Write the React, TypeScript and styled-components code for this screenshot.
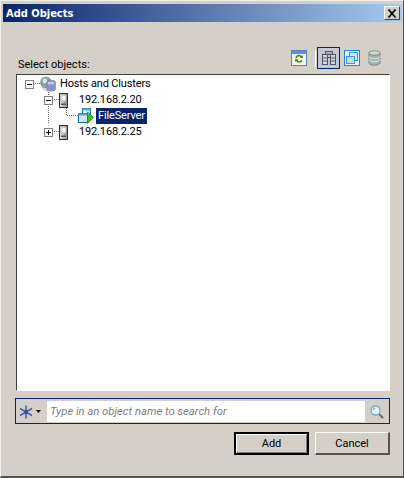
import React from "react";
import styled, { createGlobalStyle } from "styled-components";

const UI_FONT = `"Roboto", "Liberation Sans", Arial, sans-serif`;

const Global = createGlobalStyle`
  html, body { margin: 0; padding: 0; background: #d4d0c8; }
  body { width: 404px; height: 478px; overflow: hidden; font-family: ${UI_FONT}; }
`;

const Win = styled.div`
  box-sizing: border-box;
  width: 404px;
  height: 478px;
  padding: 3px 1px 0 3px;
  background: #d4d0c8;
  border-top: 1px solid #f1efea;
  border-left: 1px solid #f1efea;
  border-right: 1px solid #55534e;
  border-bottom: 2px solid #55534e;
  display: flex;
  flex-direction: column;
`;

const TitleBar = styled.div`
  flex: none;
  height: 18px;
  margin-left: -1px;
  display: flex;
  align-items: center;
  justify-content: space-between;
  padding: 0 2px 0 3px;
  background: linear-gradient(90deg, #0a246a 0%, #a6caf0 100%);
`;

const TitleText = styled.span`
  font: bold 11px "DejaVu Sans Condensed", "DejaVu Sans", sans-serif;
  font-stretch: condensed;
  color: #fff;
`;

const CloseBtn = styled.div`
  box-sizing: border-box;
  width: 16px;
  height: 14px;
  background: #d4d0c8;
  border: 1px solid;
  border-color: #fff #404040 #404040 #fff;
  display: flex;
  align-items: center;
  justify-content: center;
`;

const Body = styled.div`
  flex: 1;
  display: flex;
  flex-direction: column;
  padding: 22px 12px 0 11px;
`;

const HeaderRow = styled.div`
  display: flex;
  align-items: flex-end;
  justify-content: space-between;
  height: 30px;
`;

const Label = styled.span`
  font-size: 11px;
  color: #000;
  margin: 0 0 3px 3px;
`;

const Toolbar = styled.div`
  display: flex;
  align-items: center;
  margin-right: 4px;
  margin-bottom: 5px;
`;

const ToolBtn = styled.div<{ $active?: boolean }>`
  box-sizing: border-box;
  width: 23px;
  height: 22px;
  display: flex;
  align-items: center;
  justify-content: center;
  border: 1px solid ${p => (p.$active ? "#0a246a" : "transparent")};
  background: ${p => (p.$active ? "#c0c8da" : "transparent")};
`;

const ToolSep = styled.div`
  width: 1px;
  height: 17px;
  background: #fff;
  margin: 0 1px 0 5px;
`;

const Tree = styled.div`
  position: relative;
  box-sizing: border-box;
  height: 317px;
  padding: 1px 0 0;
  margin-left: 1px;
  background: #fff;
  border: 1px solid;
  border-color: #404040 #fff #fff #404040;
`;

const Guides = styled.svg`
  position: absolute;
  left: 0;
  top: 0;
  pointer-events: none;
`;

const Row = styled.div<{ $indent: number }>`
  display: flex;
  align-items: center;
  height: 16px;
  padding-left: ${p => p.$indent}px;
`;

const Expander = styled.div`
  flex: none;
  box-sizing: border-box;
  width: 9px;
  height: 9px;
  border: 1px solid #808080;
  background: #fff;
  position: relative;
  z-index: 1;
  display: flex;
  align-items: center;
  justify-content: center;
  margin-right: 6px;
`;

const IconSlot = styled.div`
  flex: none;
  width: 16px;
  height: 16px;
  margin-right: 2px;
  position: relative;
  z-index: 1;
`;

const NodeLabel = styled.span<{ $selected?: boolean }>`
  font-size: 11px;
  letter-spacing: -0.15px;
  line-height: 16px;
  padding: 0 2px;
  color: ${p => (p.$selected ? "#fff" : "#000")};
  background: ${p => (p.$selected ? "#0a246a" : "transparent")};
  white-space: nowrap;
`;

const SearchBar = styled.div`
  box-sizing: border-box;
  height: 26px;
  margin-top: 7px;
  display: flex;
  align-items: center;
  border: 1px solid #0a246a;
  background: #d4d0c8;
  padding: 2px 0 1px 0;
`;

const Scope = styled.div`
  flex: none;
  width: 31px;
  display: flex;
  align-items: center;
  padding-left: 3px;
  box-sizing: border-box;
  gap: 3px;
`;

const SearchInput = styled.div`
  flex: 1;
  height: 100%;
  background: #fff;
  display: flex;
  align-items: center;
  padding-left: 3px;
  font-size: 11.25px;
  font-style: italic;
  color: #808080;
`;

const SearchIconWrap = styled.div`
  flex: none;
  width: 24px;
  display: flex;
  align-items: center;
  justify-content: center;
`;

const Footer = styled.div`
  display: flex;
  justify-content: flex-end;
  gap: 6px;
  margin-top: 8px;
`;

const Btn = styled.button<{ $def?: boolean }>`
  box-sizing: border-box;
  width: 75px;
  height: 23px;
  padding: 0;
  font: 11px ${UI_FONT};
  color: #000;
  background: #d4d0c8;
  border-style: solid;
  border-width: ${p => (p.$def ? "2px" : "1px 2px 2px 1px")};
  border-color: ${p => (p.$def ? "#000" : "#fff #55534e #55534e #fff")};
  box-shadow: ${p => (p.$def ? "inset 1px 1px 0 #fff, inset -1px -1px 0 #808080" : "none")};
`;

const Minus = () => (
  <svg width="7" height="7"><path d="M1 3.5H6" stroke="#000" /></svg>
);
const Plus = () => (
  <svg width="7" height="7"><path d="M1 3.5H6M3.5 1V6" stroke="#000" /></svg>
);

const ServerIcon = () => (
  <svg width="16" height="16" viewBox="0 0 16 16">
    <defs>
      <linearGradient id="srv" x1="0" x2="1" y1="0" y2="0">
        <stop offset="0" stopColor="#e8e8e8" />
        <stop offset="1" stopColor="#8d8d8d" />
      </linearGradient>
    </defs>
    <rect x="0.5" y="1.5" width="8" height="14" fill="url(#srv)" stroke="#303030" />
    <rect x="2" y="3" width="5" height="6" fill="#f2f2f2" stroke="#9a9a9a" strokeWidth="0.6" />
    <rect x="2" y="11.5" width="5" height="1.5" fill="#555" />
  </svg>
);

const ClusterIcon = () => (
  <svg width="16" height="16" viewBox="0 0 16 16">
    <circle cx="6" cy="6.5" r="5.5" fill="#7fa595" stroke="#8a949c" strokeWidth="0.7" />
    <circle cx="5" cy="5" r="2.4" fill="#dfe8e4" />
    <rect x="6.5" y="4.5" width="9" height="10.5" rx="2.5" fill="#8a90cc" stroke="#8186ad" strokeWidth="0.7" />
    <rect x="8" y="6" width="6" height="2.5" fill="#c4c8ea" />
    <path d="M2 11.5 Q5 15 9 15" stroke="#a9b4b0" fill="none" />
  </svg>
);

const VmIcon = () => (
  <svg width="16" height="16" viewBox="0 0 16 16">
    <rect x="4.5" y="0.5" width="8" height="8" fill="#e6f2fb" stroke="#1c70b8" />
    <rect x="4.5" y="0.5" width="8" height="2" fill="#58a6dd" />
    <rect x="0.5" y="5.5" width="9" height="9" fill="#cfe6f7" stroke="#1c70b8" />
    <rect x="0.5" y="5.5" width="9" height="2" fill="#58a6dd" />
    <path d="M9.5 4 L15.5 9.5 L9.5 15.5 Z" fill="#43c02c" stroke="#1f8a17" strokeWidth="0.8" />
  </svg>
);

const RefreshIcon = () => (
  <svg width="16" height="16" viewBox="0 0 16 16">
    <rect x="0.5" y="0.5" width="15" height="15" fill="#f7f5e8" stroke="#5a7fc0" />
    <rect x="1" y="1" width="14" height="3" fill="#5d8fe0" />
    <path d="M5 8 A3 3 0 0 1 10.5 7" stroke="#3f8a1e" strokeWidth="1.6" fill="none" />
    <path d="M11 11 A3 3 0 0 1 5.5 10" stroke="#3f8a1e" strokeWidth="1.6" fill="none" transform="translate(0 -0.5)" />
    <path d="M9 8 L12 8 L11.5 5 Z" fill="#3f8a1e" />
    <path d="M7 9 L4 9 L4.5 12 Z" fill="#3f8a1e" />
  </svg>
);

const HostsViewIcon = () => (
  <svg width="16" height="15" viewBox="0 0 16 15">
    <rect x="1.5" y="3.5" width="5" height="10" fill="#d2d6dc" stroke="#4f545e" />
    <rect x="9.5" y="3.5" width="5" height="10" fill="#d2d6dc" stroke="#4f545e" />
    <rect x="4.5" y="0.5" width="7" height="3" fill="#aab0bb" stroke="#4f545e" />
    <path d="M6.5 6.5H9.5" stroke="#4f545e" />
    <path d="M2 7H6M10 7H14M2 10H6M10 10H14" stroke="#5d636e" />
  </svg>
);

const VmsViewIcon = () => (
  <svg width="16" height="16" viewBox="0 0 16 16">
    <rect x="0.5" y="0.5" width="15" height="15" fill="#e6f3fc" stroke="#1c86d6" />
    <rect x="5.5" y="2.5" width="8" height="8" fill="#cfe6f7" stroke="#3a9adf" />
    <rect x="2.5" y="6.5" width="8" height="7" fill="#bfdcf3" stroke="#3a9adf" />
  </svg>
);

const StorageIcon = () => (
  <svg width="13" height="16" viewBox="0 0 13 16">
    <path d="M1 3 V13 A5.5 2.2 0 0 0 12 13 V3" fill="#a7b3ad" stroke="#7b8782" />
    <ellipse cx="6.5" cy="3" rx="5.5" ry="2.2" fill="#d3dad6" stroke="#7b8782" />
    <path d="M1 6.5 A5.5 2.2 0 0 0 12 6.5 M1 9.5 A5.5 2.2 0 0 0 12 9.5" stroke="#e4e9e6" fill="none" />
  </svg>
);

const AsteriskIcon = () => (
  <svg width="14" height="14" viewBox="0 0 14 14">
    <path d="M7 0.5V13.5M1 3.5L13 10.5M13 3.5L1 10.5" stroke="#4a5fa8" strokeWidth="1.6" />
    <circle cx="7" cy="7" r="2" fill="#3f5299" />
  </svg>
);

const Caret = () => (
  <svg width="5" height="3" viewBox="0 0 5 3"><path d="M0 0H5L2.5 3Z" fill="#000" /></svg>
);

const MagnifierIcon = () => (
  <svg width="14" height="14" viewBox="0 0 14 14">
    <path d="M9 9L13 13" stroke="#6a7076" strokeWidth="2.2" />
    <circle cx="5.5" cy="5.5" r="4.5" fill="#e2f2fb" stroke="#7fa8bd" strokeWidth="1.3" />
    <path d="M3 5.2A2.8 2.8 0 0 1 5.2 3" stroke="#57b3e0" strokeWidth="1.2" fill="none" />
  </svg>
);

const CloseGlyph = () => (
  <svg width="10" height="9" viewBox="0 0 10 9">
    <path d="M1.5 0.5L8.5 8.5M8.5 0.5L1.5 8.5" stroke="#000" strokeWidth="1.7" />
  </svg>
);

export default function App() {
  return (
    <>
      <Global />
      <Win>
        <TitleBar>
          <TitleText>Add Objects</TitleText>
          <CloseBtn><CloseGlyph /></CloseBtn>
        </TitleBar>
        <Body>
          <HeaderRow>
            <Label>Select objects:</Label>
            <Toolbar>
              <ToolBtn><RefreshIcon /></ToolBtn>
              <ToolSep />
              <ToolBtn $active><HostsViewIcon /></ToolBtn>
              <ToolBtn><VmsViewIcon /></ToolBtn>
              <ToolBtn><StorageIcon /></ToolBtn>
            </Toolbar>
          </HeaderRow>
          <Tree>
            <Guides width="120" height="70">
              <path
                d="M16 8.5H23M31.5 17V49M35 24.5H42M35 56.5H42M49.5 33V40.5H61"
                stroke="#707070"
                strokeDasharray="1 1"
                fill="none"
              />
            </Guides>
            <Row $indent={8}>
              <Expander><Minus /></Expander>
              <IconSlot><ClusterIcon /></IconSlot>
              <NodeLabel>Hosts and Clusters</NodeLabel>
            </Row>
            <Row $indent={27}>
              <Expander><Minus /></Expander>
              <IconSlot><ServerIcon /></IconSlot>
              <NodeLabel>192.168.2.20</NodeLabel>
            </Row>
            <Row $indent={61}>
              <IconSlot><VmIcon /></IconSlot>
              <NodeLabel $selected>FileServer</NodeLabel>
            </Row>
            <Row $indent={27}>
              <Expander><Plus /></Expander>
              <IconSlot><ServerIcon /></IconSlot>
              <NodeLabel>192.168.2.25</NodeLabel>
            </Row>
          </Tree>
          <SearchBar>
            <Scope><AsteriskIcon /><Caret /></Scope>
            <SearchInput>Type in an object name to search for</SearchInput>
            <SearchIconWrap><MagnifierIcon /></SearchIconWrap>
          </SearchBar>
          <Footer>
            <Btn $def>Add</Btn>
            <Btn>Cancel</Btn>
          </Footer>
        </Body>
      </Win>
    </>
  );
}
